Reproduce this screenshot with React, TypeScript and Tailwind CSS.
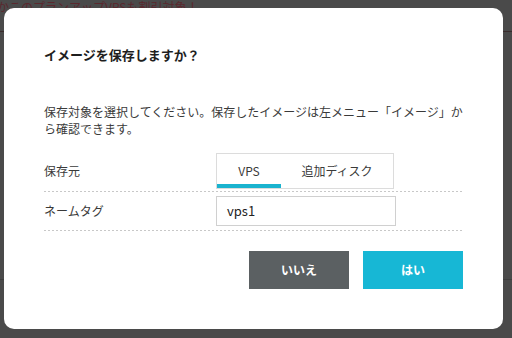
const FONT = "font-['Noto_Sans_CJK_JP','Noto_Sans',sans-serif]"

function Separator() {
  return (
    <div className="h-px w-full bg-[linear-gradient(to_right,#c8c8c8_50%,transparent_50%)] bg-[length:4px_1px] bg-repeat-x" />
  )
}

export default function App() {
  return (
    <div className={`relative w-[512px] h-[338px] overflow-hidden bg-[#4a4a4a] ${FONT}`}>
      {/* dimmed page behind the dialog */}
      <div className="h-[31px] -ml-[3px] pt-0 text-[12px] leading-[14px] text-[#5a282e] whitespace-nowrap">
        かこのプランアップVPSも割引対象！
      </div>
      <div className="h-px bg-[#3a2c2c]" />
      <div className="h-[247px]" />
      <div className="h-px bg-[#3e3e3e]" />

      {/* ── Dialog ── */}
      <div className="absolute left-[4px] top-[8px] w-[499px] h-[321px] rounded-[10px] bg-white px-10 pt-[37px] text-[#333]">
        <h2 className="text-[13px] font-bold leading-[19px] text-[#1e1e1e]">イメージを保存しますか？</h2>

        <p className="mt-[39px] text-[12px] leading-[17px] whitespace-nowrap text-[#3a3a3a]">
          保存対象を選択してください。保存したイメージは左メニュー「イメージ」か
          <br />
          ら確認できます。
        </p>

        <div className="mt-[13px]">
          {/* 保存元 */}
          <div className="flex items-center pt-[3px] pb-[2px]">
            <div className="w-[172px] text-[12px] text-[#3a3a3a]">保存元</div>
            <div className="flex h-[36px] border border-[#dcdcdc]">
              <div className="relative w-[64px] flex items-center justify-center text-[12px] text-[#3a3a3a]">
                VPS
                <div className="absolute left-0 right-0 bottom-0 h-[4px] bg-[#1ab3cf]" />
              </div>
              <div className="w-[112px] flex items-center justify-center text-[12px] text-[#3a3a3a]">
                追加ディスク
              </div>
            </div>
          </div>
          <Separator />

          {/* ネームタグ */}
          <div className="flex items-center py-[4px]">
            <div className="w-[172px] text-[12px] text-[#3a3a3a]">ネームタグ</div>
            <div className="w-[180px] h-[30px] border border-[#d0d0d0] flex items-center px-[10px] text-[13px] text-[#222]">
              vps1
            </div>
          </div>
          <Separator />
        </div>

        <div className="mt-[20px] flex justify-end gap-[14px]">
          <button className="w-[100px] h-[38px] bg-[#5b6062] text-white text-[12px] font-bold">いいえ</button>
          <button className="w-[100px] h-[38px] bg-[#17b7d5] text-white text-[12px] font-bold">はい</button>
        </div>
      </div>
    </div>
  )
}
